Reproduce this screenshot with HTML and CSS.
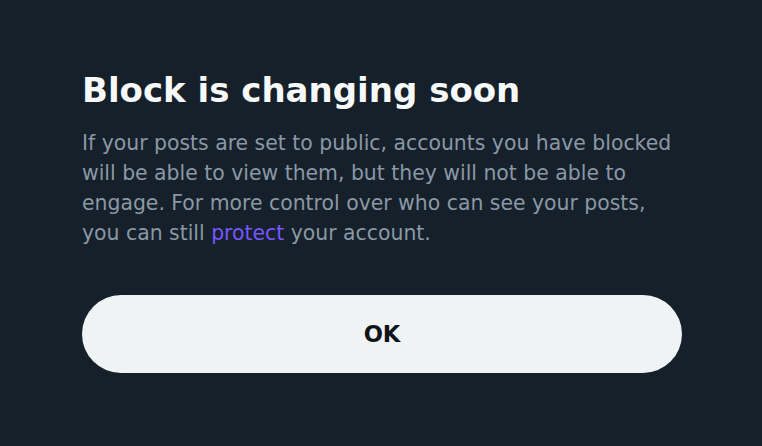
FILE: index.html
```html
<!DOCTYPE html>
<html>
<head>
<meta charset="utf-8">
<link rel="stylesheet" href="styles.css">
</head>
<body>
<div class="dialog">
  <h1 class="title">Block is changing soon</h1>
  <p class="desc">If your posts are set to public, accounts you have blocked will be able to view them, but they will not be able to engage. For more control over who can see your posts, you can still <a class="link" href="#">protect</a> your account.</p>
  <button class="ok">OK</button>
</div>
</body>
</html>
```

FILE: styles.css
```css
html, body {
  margin: 0;
  padding: 0;
  background: #15202b;
  width: 762px;
  height: 446px;
  overflow: hidden;
}
.dialog {
  padding: 70px 80px 0 82px;
  font-family: "DejaVu Sans", sans-serif;
  display: flex;
  flex-direction: column;
  align-items: flex-start;
}
.title {
  margin: 0;
  font-size: 34px;
  line-height: 40px;
  font-weight: 700;
  color: #f7f9f9;
  white-space: nowrap;
}
.desc {
  margin: 18px 0 0;
  font-size: 20.4px;
  line-height: 30px;
  color: #8b98a5;
  width: 596px;
}
.link {
  color: #7856ff;
  text-decoration: none;
}
.ok {
  margin-top: 47px;
  width: 600px;
  height: 78px;
  border: none;
  border-radius: 39px;
  background: #eff3f4;
  color: #0f1419;
  font-family: "DejaVu Sans", sans-serif;
  font-weight: 700;
  font-size: 22.6px;
  padding: 0;
}
```
